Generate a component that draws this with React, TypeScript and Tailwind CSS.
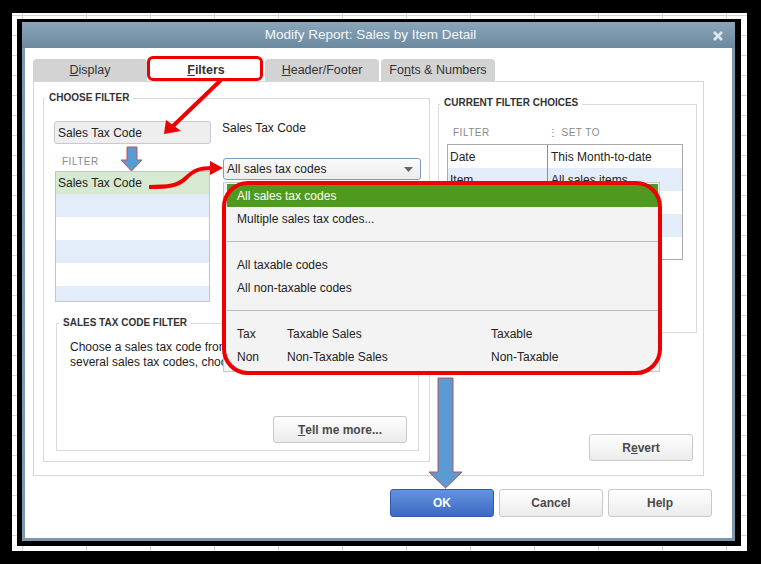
import React from "react";

/* ---------------- small pieces ---------------- */
function Tab({ label, k, active }: { label: string; k: number; active?: boolean }) {
  return (
    <div
      className={`w-[114px] h-[22px] rounded-t-[4px] flex items-center justify-center text-[12.5px] text-[#333] ${
        active ? "bg-white font-bold" : "bg-[#d3d3d3]"
      }`}
    >
      {label.slice(0, k)}
      <span className="underline">{label[k]}</span>
      {label.slice(k + 1)}
    </div>
  );
}

function GrayButton({ children, w, h }: any) {
  return (
    <div
      className={`${w} ${h} rounded-[3px] border border-[#c9c9c9] bg-linear-to-b from-white to-[#ebebeb] flex items-center justify-center text-[12px] font-bold text-[#4a4a4a]`}
    >
      {children}
    </div>
  );
}

function GroupLabel({ text, cls }: { text: string; cls: string }) {
  return (
    <span className={`absolute ${cls} bg-white px-[4px] text-[10px] leading-[12px] font-bold text-[#333]`}>
      {text}
    </span>
  );
}

/* ---------------- APP ---------------- */
export default function App() {
  const tableRows = [
    ["Date", "This Month-to-date"],
    ["Item", "All sales items"],
    ["", ""],
    ["", ""],
    ["", ""],
  ];

  return (
    <div className="relative w-[761px] h-[564px] overflow-hidden bg-black pl-[12px] pt-[13px] font-['Liberation_Sans',Arial,sans-serif]">
      {/* spreadsheet behind the dialog */}
      <div className="w-[735px] h-[538px] bg-white bg-[image:linear-gradient(to_right,#d4d4d4_1px,transparent_1px),linear-gradient(to_bottom,#d4d4d4_1px,transparent_1px)] bg-[size:64px_20px] bg-[position:10px_2px] pl-[5px] pt-[6px]">
        {/* black frame */}
        <div className="w-[724px] h-[527px] bg-black pl-[5px] pt-[3px]">
          {/* dialog */}
          <div className="w-[713px] h-[519px] flex flex-col">
            <div className="h-[26px] bg-linear-to-b from-[#8ba6ba] to-[#6b899f] flex items-center relative">
              <div className="flex-1 text-center pr-[16px] text-[13.5px] text-[#f4f7fa]">
                Modify Report: Sales by Item Detail
              </div>
              <svg width="10" height="10" viewBox="0 0 10 10" className="absolute right-[12px] top-[9px]">
                <path d="M1 1 L9 9 M9 1 L1 9" stroke="#dfe6ec" strokeWidth="2.6" />
              </svg>
            </div>

            <div className="flex-1 bg-white border-x-[3px] border-b-[3px] border-[#7f97aa] flex flex-col">
              {/* tabs */}
              <div className="mt-[11px] ml-[8px] flex gap-[2px]">
                <Tab label="Display" k={0} />
                <Tab label="Filters" k={0} active />
                <Tab label="Header/Footer" k={0} />
                <Tab label="Fonts & Numbers" k={2} />
              </div>

              {/* tab panel */}
              <div className="ml-[8px] w-[671px] h-[395px] border border-[#d6d6d6] flex">
                {/* CHOOSE FILTER */}
                <div className="relative ml-[9px] mt-[16px] w-[387px] h-[364px] border border-[#dadada] pl-[10px] pt-[22px]">
                  <GroupLabel text="CHOOSE FILTER" cls="-top-[7px] left-[1px]" />
                  <div className="flex">
                    <div className="w-[157px] flex flex-col">
                      <div className="h-[23px] rounded-[3px] border border-[#c9c9c9] bg-[#eeeeee] pl-[3px] flex items-center text-[12px] text-[#222]">
                        Sales Tax Code
                      </div>
                      <div className="mt-[12px] ml-[8px] h-[12px] text-[10px] leading-[12px] tracking-[0.5px] text-[#8a8a8a]">
                        FILTER
                      </div>
                      <div className="mt-[3px] ml-[1px] w-[155px] h-[131px] border border-[#c6c6c6] overflow-hidden">
                        <div className="h-[22px] bg-[#d6e9d1] pl-[2px] flex items-center text-[12px] text-[#222]">
                          Sales Tax Code
                        </div>
                        <div className="h-[23px] bg-[#e3edf9]" />
                        <div className="h-[23px] bg-white" />
                        <div className="h-[23px] bg-[#e3edf9]" />
                        <div className="h-[23px] bg-white" />
                        <div className="h-[23px] bg-[#e3edf9]" />
                      </div>
                    </div>
                    <div className="ml-[11px] w-[199px] flex flex-col">
                      <div className="text-[12px] leading-[14px] text-[#222]">Sales Tax Code</div>
                      <div className="mt-[23px] ml-[1px] w-[198px] h-[22px] rounded-[3px] border border-[#7e9dc4] bg-linear-to-b from-[#fafafa] to-[#ececec] flex items-center pl-[3px] pr-[7px] text-[12px] text-[#222]">
                        <span className="flex-1">All sales tax codes</span>
                        <svg width="9" height="5" viewBox="0 0 9 5">
                          <path d="M0 0 L9 0 L4.5 5 Z" fill="#666" />
                        </svg>
                      </div>
                    </div>
                  </div>

                  {/* SALES TAX CODE FILTER */}
                  <div className="relative mt-[21px] ml-[2px] w-[363px] h-[128px] border border-[#dadada] flex flex-col">
                    <GroupLabel text="SALES TAX CODE FILTER" cls="-top-[7px] left-[2px]" />
                    {/* the rest of this text lies under the open list */}
                    <div className="ml-[13px] mt-[16px] w-[153px] overflow-hidden whitespace-nowrap text-[12px] leading-[15px] text-[#222]">
                      Choose a sales tax code from the list.
                      <br />
                      several sales tax codes, choose
                    </div>
                    <div className="mt-[46px] mr-[11px] self-end">
                      <GrayButton w="w-[134px]" h="h-[27px]">
                        <span className="underline">T</span>ell me more...
                      </GrayButton>
                    </div>
                  </div>
                </div>

                {/* CURRENT FILTER CHOICES */}
                <div className="ml-[8px] mt-[22px] w-[259px] flex flex-col">
                  <div className="relative h-[229px] border border-[#dadada] pt-[22px]">
                    <GroupLabel text="CURRENT FILTER CHOICES" cls="-top-[8px] left-[1px]" />
                    <div className="flex h-[12px] text-[10px] leading-[12px] tracking-[0.5px] text-[#8a8a8a]">
                      <span className="ml-[14px] w-[95px]">FILTER</span>
                      <span className="text-[#777] mr-[3px]">⋮</span>
                      <span>SET TO</span>
                    </div>
                    <div className="mt-[5px] ml-[8px] w-[236px] h-[116px] border border-[#a8a8a8] overflow-hidden">
                      {tableRows.map((r, i) => (
                        <div
                          key={i}
                          className={`h-[23px] flex text-[12px] text-[#222] ${i % 2 ? "bg-[#e3edf9]" : "bg-white"}`}
                        >
                          <div className="w-[100px] border-r border-[#8f8f8f] pl-[2px] flex items-center">{r[0]}</div>
                          <div className="pl-[3px] flex items-center">{r[1]}</div>
                        </div>
                      ))}
                    </div>
                  </div>
                  <div className="mt-[101px] mr-[4px] self-end">
                    <GrayButton w="w-[104px]" h="h-[27px]">
                      R<span className="underline">e</span>vert
                    </GrayButton>
                  </div>
                </div>
              </div>

              {/* buttons */}
              <div className="mt-[13px] pr-[20px] flex justify-end gap-[5px]">
                <div className="w-[104px] h-[28px] rounded-[3px] border border-[#2e5bb0] bg-linear-to-b from-[#6494de] to-[#3c69c4] flex items-center justify-center text-[12px] font-bold text-white">
                  OK
                </div>
                <GrayButton w="w-[104px]" h="h-[28px]">Cancel</GrayButton>
                <GrayButton w="w-[104px]" h="h-[28px]">Help</GrayButton>
              </div>
            </div>
          </div>
        </div>
      </div>

      {/* dropdown list, open over the dialog */}
      <div className="absolute left-[223px] top-[182px] w-[437px] h-[190px] border border-[#c8c8c8] bg-[#f3f3f3] pl-[3px] pr-[1px] pt-[1px] text-[12px] text-[#222]">
        <div className="h-[23px] bg-[#4f9a1e] pl-[10px] flex items-center text-white">All sales tax codes</div>
        <div className="h-[23px] pl-[10px] flex items-center">Multiple sales tax codes...</div>
        <div className="h-[23px] flex items-center">
          <div className="w-full h-px bg-[#bdbdbd]" />
        </div>
        <div className="h-[23px] pl-[10px] flex items-center">All taxable codes</div>
        <div className="h-[23px] pl-[10px] flex items-center">All non-taxable codes</div>
        <div className="h-[23px] flex items-center">
          <div className="w-full h-px bg-[#bdbdbd]" />
        </div>
        <div className="h-[23px] pl-[10px] flex items-center">
          <span className="w-[50px]">Tax</span>
          <span className="w-[204px]">Taxable Sales</span>
          <span>Taxable</span>
        </div>
        <div className="h-[23px] pl-[10px] flex items-center">
          <span className="w-[50px]">Non</span>
          <span className="w-[204px]">Non-Taxable Sales</span>
          <span>Non-Taxable</span>
        </div>
      </div>

      {/* red highlight boxes */}
      <div className="absolute left-[222px] top-[181px] w-[440px] h-[194px] border-4 border-[#ee0000] rounded-[26px]" />
      <div className="absolute left-[147px] top-[56px] w-[116px] h-[25px] border-[3px] border-[#ee0000] rounded-[6px]" />

      {/* arrows */}
      <svg className="absolute left-0 top-0 pointer-events-none" width="761" height="564" viewBox="0 0 761 564">
        <path d="M221 80 L172 127" stroke="#ee0000" strokeWidth="4" fill="none" />
        <polygon points="164,134 166,120 181,131" fill="#ee0000" />
        <path d="M149 187 C168 187 178 186 186 178 C194 170 200 168 212 168" stroke="#ee0000" strokeWidth="4" fill="none" />
        <polygon points="210,161 223,168 210,175" fill="#ee0000" />
        <polygon
          points="127,147 137,147 137,160 142,160 131.5,171 121,160 127,160"
          fill="#5b9bd5"
          stroke="#c0504d"
          strokeWidth="1"
        />
        <polygon
          points="438,378 453,378 453,472 462,472 445.5,488 429,472 438,472"
          fill="#5b9bd5"
          stroke="#c0504d"
          strokeWidth="1"
        />
      </svg>
    </div>
  );
}
